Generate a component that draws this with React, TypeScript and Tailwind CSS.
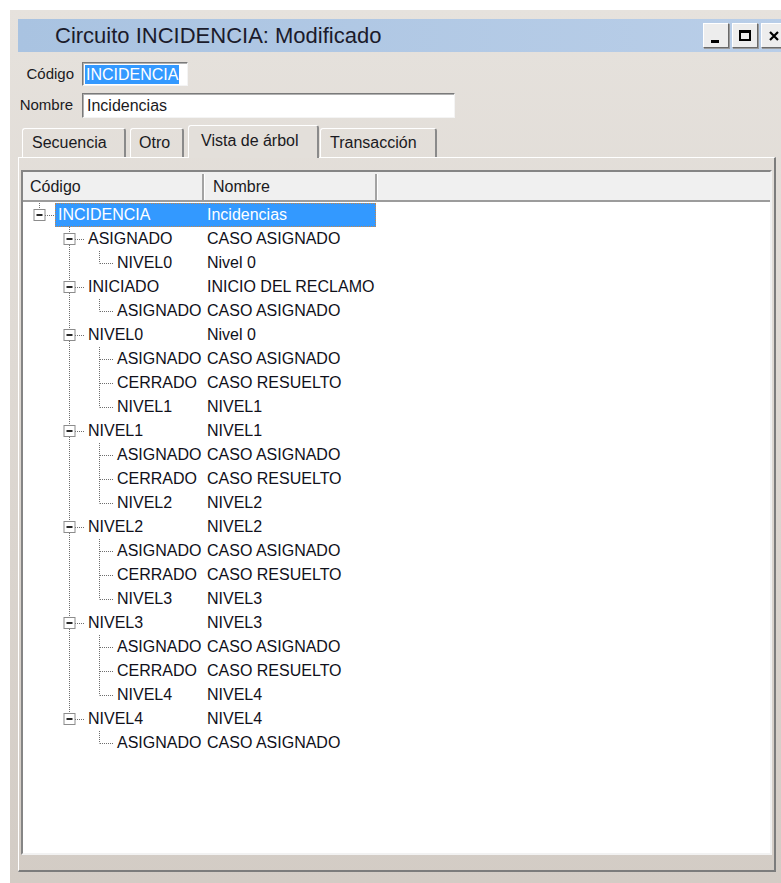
type Node = {
  level: 0 | 1 | 2;
  code: string;
  name: string;
  last?: boolean;
  parentLast?: boolean;
};

const groups: [string, string, [string, string][]][] = [
  ["ASIGNADO", "CASO ASIGNADO", [["NIVEL0", "Nivel 0"]]],
  ["INICIADO", "INICIO DEL RECLAMO", [["ASIGNADO", "CASO ASIGNADO"]]],
  ["NIVEL0", "Nivel 0", [["ASIGNADO", "CASO ASIGNADO"], ["CERRADO", "CASO RESUELTO"], ["NIVEL1", "NIVEL1"]]],
  ["NIVEL1", "NIVEL1", [["ASIGNADO", "CASO ASIGNADO"], ["CERRADO", "CASO RESUELTO"], ["NIVEL2", "NIVEL2"]]],
  ["NIVEL2", "NIVEL2", [["ASIGNADO", "CASO ASIGNADO"], ["CERRADO", "CASO RESUELTO"], ["NIVEL3", "NIVEL3"]]],
  ["NIVEL3", "NIVEL3", [["ASIGNADO", "CASO ASIGNADO"], ["CERRADO", "CASO RESUELTO"], ["NIVEL4", "NIVEL4"]]],
  ["NIVEL4", "NIVEL4", [["ASIGNADO", "CASO ASIGNADO"]]],
];

const nodes: Node[] = [{ level: 0, code: "INCIDENCIA", name: "Incidencias" }];
groups.forEach(([code, name, kids], gi) => {
  const gLast = gi === groups.length - 1;
  nodes.push({ level: 1, code, name, last: gLast });
  kids.forEach(([c, n], ki) => {
    nodes.push({ level: 2, code: c, name: n, last: ki === kids.length - 1, parentLast: gLast });
  });
});

const DOT = { stroke: "#6e6e6e", strokeWidth: 1, strokeDasharray: "1 1" };

function Expander({ cx }: { cx: number }) {
  return (
    <g>
      <rect x={cx - 5.5} y={6.5} width={11} height={11} fill="#fff" stroke="#8c8c8c" />
      <line x1={cx - 3} y1={12} x2={cx + 3} y2={12} stroke="#111" strokeWidth={1.8} />
    </g>
  );
}

// tree connector lines drawn to the left of each label
function Lines({ node }: { node: Node }) {
  if (node.level === 0) {
    return (
      <svg width={32} height={24} className="shrink-0">
        <line x1={16.5} y1={0} x2={16.5} y2={6} {...DOT} />
        <line x1={22} y1={12.5} x2={32} y2={12.5} {...DOT} />
        <Expander cx={16.5} />
      </svg>
    );
  }
  if (node.level === 1) {
    return (
      <svg width={62} height={24} className="shrink-0">
        <line x1={46.5} y1={0} x2={46.5} y2={node.last ? 12 : 24} {...DOT} />
        <line x1={52} y1={12.5} x2={62} y2={12.5} {...DOT} />
        <Expander cx={46.5} />
      </svg>
    );
  }
  return (
    <svg width={91} height={24} className="shrink-0">
      {!node.parentLast && <line x1={46.5} y1={0} x2={46.5} y2={24} {...DOT} />}
      <line x1={76.5} y1={0} x2={76.5} y2={node.last ? 12.5 : 24} {...DOT} />
      <line x1={77} y1={12.5} x2={91} y2={12.5} {...DOT} />
    </svg>
  );
}

function Row({ node, selected }: { node: Node; selected?: boolean }) {
  const codeW = node.level === 0 ? "w-[149px]" : node.level === 1 ? "w-[119px]" : "w-[90px]";
  return (
    <div className="flex h-[24px] items-stretch">
      <Lines node={node} />
      <div
        className={
          selected
            ? "flex border border-dotted border-[#c7874a] bg-[#3399ff] text-white"
            : "flex border border-transparent text-[#10101a]"
        }
      >
        <span className={`${codeW} whitespace-nowrap pl-[2px] leading-[22px]`}>{node.code}</span>
        <span className="w-[170px] whitespace-nowrap pl-[2px] leading-[22px]">{node.name}</span>
      </div>
    </div>
  );
}

function CaptionButton({ children }: { children: React.ReactNode }) {
  return (
    <div className="flex h-[25px] w-[26px] items-center justify-center border border-t-white border-l-white border-r-[#6a6a6a] border-b-[#6a6a6a] bg-[#ededed] shadow-[1px_1px_0_#9a9a9a]">
      {children}
    </div>
  );
}

const tabBase =
  "flex items-center rounded-t-[3px] border-t border-l border-r-2 border-t-white border-l-white border-r-[#8a8a8a] text-[16px] text-[#1a1a22]";

export default function App() {
  return (
    <div className="h-[883px] w-[781px] overflow-hidden bg-white pl-[10px] pt-[10px] font-['Liberation_Sans',Arial,sans-serif]">
      <div className="flex h-full flex-col bg-linear-to-b from-[#e6e2dd] to-[#d3ccc5] pl-[8px] pt-[9px]">
        {/* caption */}
        <div className="flex h-[33px] items-center bg-linear-to-r from-[#a9c3e1] to-[#b9cee8]">
          <span className="pl-[37px] text-[22px] text-[#1b1b2b]">Circuito INCIDENCIA: Modificado</span>
          <div className="ml-auto mr-[-6px] flex gap-[3px]">
            <CaptionButton>
              <span className="mt-[12px] ml-[-2px] block h-[3px] w-[8px] bg-black" />
            </CaptionButton>
            <CaptionButton>
              <span className="block h-[11px] w-[12px] border-2 border-t-[3px] border-black" />
            </CaptionButton>
            <CaptionButton>
              <svg width={12} height={12} viewBox="0 0 12 12">
                <path d="M2 2 L10 10 M10 2 L2 10" stroke="#000" strokeWidth={2.2} />
              </svg>
            </CaptionButton>
          </div>
        </div>

        {/* fields */}
        <div className="mt-[10px] flex items-center">
          <label className="w-[64px] pr-[8px] text-right text-[15px] text-[#1a1a22]">Código</label>
          <div className="flex h-[24px] w-[106px] items-center border border-t-[#7a7a7a] border-l-[#7a7a7a] border-r-[#f4f4f4] border-b-[#f4f4f4] bg-white pl-[2px] shadow-[inset_1px_1px_0_#b0b0b0]">
            <span className="bg-[#3399ff] px-[1px] text-[16px] leading-[19px] text-white">INCIDENCIA</span>
          </div>
        </div>
        <div className="mt-[7px] flex items-center">
          <label className="w-[64px] pr-[9px] text-right text-[15px] text-[#1a1a22]">Nombre</label>
          <div className="flex h-[25px] w-[373px] items-center border border-t-[#7a7a7a] border-l-[#7a7a7a] border-r-[#f4f4f4] border-b-[#f4f4f4] bg-white pl-[4px] text-[16px] text-[#1a1a22] shadow-[inset_1px_1px_0_#b0b0b0]">
            Incidencias
          </div>
        </div>

        {/* tabs */}
        <div className="mt-[7px] flex h-[32px] items-end pl-[4px]">
          <div className={`${tabBase} h-[29px] w-[104px] pl-[9px]`}>Secuencia</div>
          <div className={`${tabBase} ml-[4px] h-[29px] w-[54px] pl-[8px]`}>Otro</div>
          <div className={`${tabBase} relative z-10 mb-[-1px] ml-[4px] h-[33px] w-[131px] bg-[#e3dfda] pb-[2px] pl-[12px]`}>
            Vista de árbol
          </div>
          <div className={`${tabBase} ml-[1px] h-[29px] w-[117px] pl-[9px]`}>Transacción</div>
        </div>

        {/* tab page */}
        <div className="flex h-[715px] w-[758px] flex-col border-t border-l border-r-2 border-b-2 border-t-white border-l-white border-r-[#7c7c7c] border-b-[#7c7c7c] pb-[15px] pl-[2px] pr-[2px] pt-[12px]">
          <div className="flex flex-1 flex-col border-2 border-t-[#858585] border-l-[#858585] border-r-[#f2f2f2] border-b-[#f2f2f2] bg-white text-[16px]">
            <div className="flex h-[30px] border-b-2 border-b-[#9c9c9c] bg-[#f0f0f0] pt-[2px] text-[#1a1a22]">
              <div className="flex w-[181px] items-center border-r-2 border-r-[#a3a3a3] pl-[7px]">Código</div>
              <div className="flex w-[173px] items-center border-l border-l-white border-r-2 border-r-[#a3a3a3] pl-[8px]">
                Nombre
              </div>
              <div className="flex-1 border-l border-l-white" />
            </div>
            <div className="flex flex-col pt-[1px]">
              {nodes.map((n, i) => (
                <Row key={i} node={n} selected={i === 0} />
              ))}
            </div>
          </div>
        </div>
      </div>
    </div>
  );
}
